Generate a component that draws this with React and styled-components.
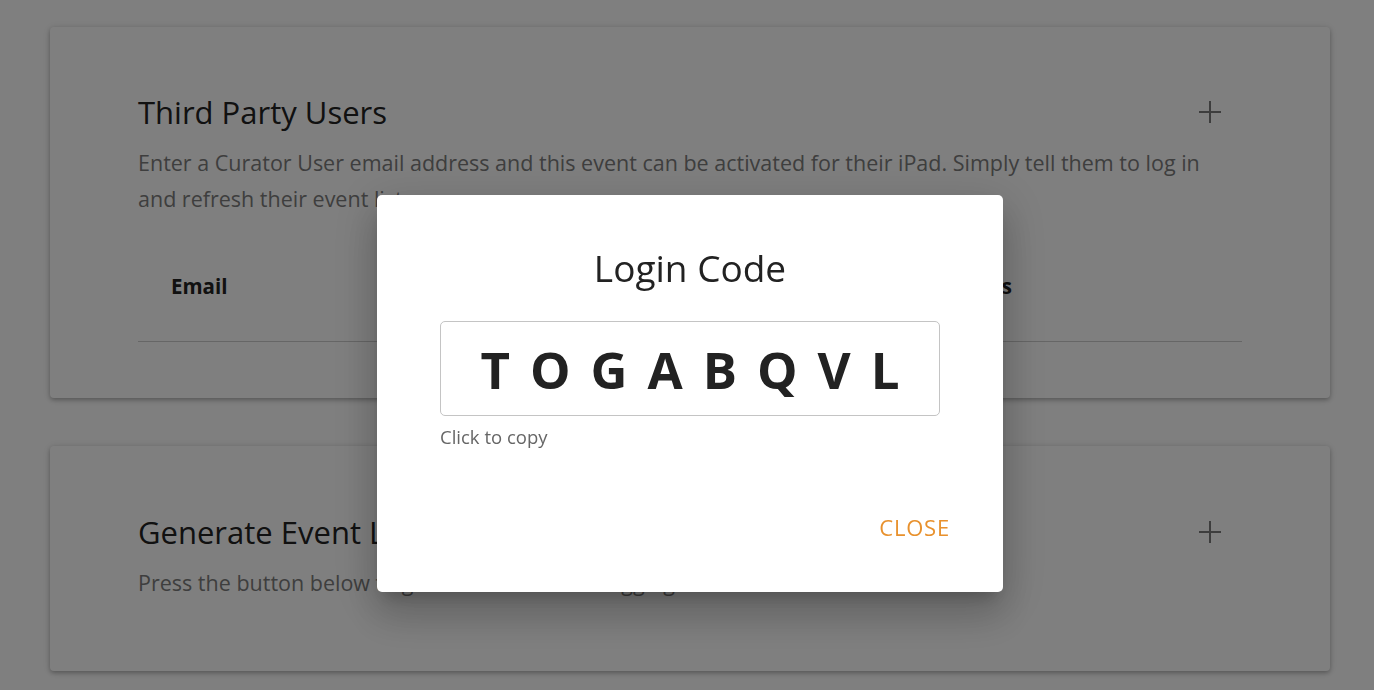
import styled, { createGlobalStyle } from 'styled-components';

const GlobalStyle = createGlobalStyle`
  html, body {
    margin: 0;
    padding: 0;
    background: #fff;
    font-family: 'Open Sans', 'Noto Sans', sans-serif;
  }
`;

const Page = styled.main`
  display: flex;
  flex-direction: column;
  gap: 48px;
  padding: 27px 44px 40px 50px;
`;

const Card = styled.section`
  background: #fff;
  border-radius: 4px;
  box-shadow: 0 2px 4px rgba(0, 0, 0, 0.25), 0 1px 10px rgba(0, 0, 0, 0.12);
  padding: ${(p) => p.$pad};
`;

const CardHead = styled.div`
  display: flex;
  justify-content: space-between;
  align-items: center;
`;

const Title = styled.h2`
  margin: 0;
  font-size: 31px;
  font-weight: 400;
  color: #222;
  line-height: 36px;
`;

const Plus = styled.svg`
  width: 24px;
  height: 24px;
  margin-right: 20px;
  stroke: #7a7a7a;
  stroke-width: 2;
`;

const Desc = styled.p`
  margin: 15px 0 0;
  font-size: 21.5px;
  line-height: 36px;
  color: #7d7d7d;
  max-width: 1080px;
`;

const TableHead = styled.div`
  display: flex;
  justify-content: space-between;
  margin-top: 55px;
  padding: 0 230px 0 33px;
  height: 69px;
  border-bottom: 1px solid #ccc;
  font-weight: 700;
  font-size: 20.5px;
  color: #222;
`;

const Overlay = styled.div`
  position: fixed;
  inset: 0;
  background: rgba(0, 0, 0, 0.5);
  display: flex;
  align-items: flex-start;
  padding: 195px 0 0 377px;
`;

const Dialog = styled.div`
  width: 626px;
  height: 397px;
  box-sizing: border-box;
  background: #fff;
  border-radius: 5px;
  box-shadow: 0 11px 15px -7px rgba(0, 0, 0, 0.2), 0 24px 38px 3px rgba(0, 0, 0, 0.14),
    0 9px 46px 8px rgba(0, 0, 0, 0.12);
  padding: 48px 53px 0 63px;
  display: flex;
  flex-direction: column;
`;

const DialogTitle = styled.h1`
  margin: 0 10px 0 0;
  text-align: center;
  font-size: 37px;
  font-weight: 400;
  line-height: 50px;
  color: #222;
`;

const CodeBox = styled.button`
  margin-top: 28px;
  width: 500px;
  height: 95px;
  background: #fff;
  border: 1px solid #c4c4c4;
  border-radius: 5px;
  font-family: inherit;
  font-size: 51px;
  font-weight: 700;
  letter-spacing: 20px;
  padding: 0 0 0 20px;
  color: #222;
  cursor: pointer;
`;

const Hint = styled.div`
  margin-top: 8px;
  font-size: 18.5px;
  color: #666;
`;

const Actions = styled.div`
  margin-top: auto;
  margin-bottom: 50px;
  display: flex;
  justify-content: flex-end;
`;

const TextButton = styled.button`
  background: none;
  border: none;
  padding: 0;
  font-family: inherit;
  font-size: 22px;
  letter-spacing: 0.8px;
  color: #e8912d;
  cursor: pointer;
`;

const TableBody = styled.div`
  height: 56px;
`;

const PlusIcon = () => (
  <Plus viewBox="0 0 24 24" fill="none">
    <path d="M12 1v22M1 12h22" />
  </Plus>
);

export default function App() {
  return (
    <>
      <GlobalStyle />
      <Page>
        <Card $pad="67px 88px 0 88px">
          <CardHead>
            <Title>Third Party Users</Title>
            <PlusIcon />
          </CardHead>
          <Desc>
            Enter a Curator User email address and this event can be activated for their iPad. Simply tell them to log in
            and refresh their event list.
          </Desc>
          <TableHead>
            <span>Email</span>
            <span>Access</span>
          </TableHead>
          <TableBody />
        </Card>
        <Card $pad="68px 88px 70px 88px">
          <CardHead>
            <Title>Generate Event Login Code</Title>
            <PlusIcon />
          </CardHead>
          <Desc>Press the button below to generate a code for logging in to this event.</Desc>
        </Card>
      </Page>
      <Overlay>
        <Dialog>
          <DialogTitle>Login Code</DialogTitle>
          <CodeBox>TOGABQVL</CodeBox>
          <Hint>Click to copy</Hint>
          <Actions>
            <TextButton>CLOSE</TextButton>
          </Actions>
        </Dialog>
      </Overlay>
    </>
  );
}
